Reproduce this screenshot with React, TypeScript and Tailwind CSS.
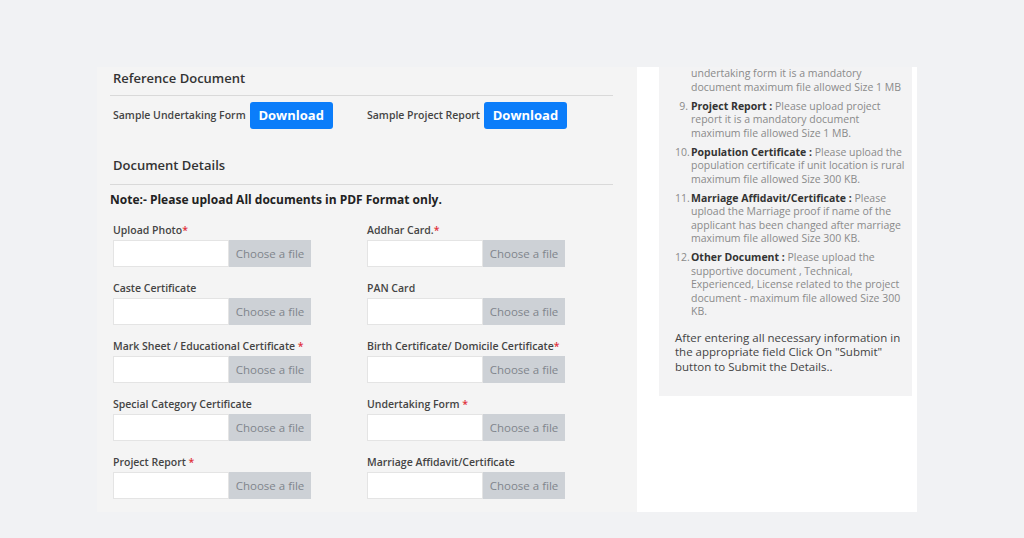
import React from "react";

const font = { fontFamily: '"Open Sans", "Liberation Sans", sans-serif' };

function FileField({ label, required }: { label: string; required?: boolean }) {
  return (
    <div className="flex flex-col">
      <div className="h-[14px] text-[10.5px] leading-[14px] font-semibold text-[#444]">
        {label}
        {required && <span className="text-[#e0303a]">*</span>}
      </div>
      <div className="mt-[3px] flex h-[27px] w-[198px]">
        <div className="w-[116px] bg-white border border-[#e4e4e4]" />
        <div className="flex w-[82px] items-center justify-center bg-[#cdd1d6] text-[11.5px] text-[#80858c]">
          Choose a file
        </div>
      </div>
    </div>
  );
}

const fields: [string, boolean, string, boolean][] = [
  ["Upload Photo", true, "Addhar Card.", true],
  ["Caste Certificate", false, "PAN Card", false],
  ["Mark Sheet / Educational Certificate ", true, "Birth Certificate/ Domicile Certificate", true],
  ["Special Category Certificate", false, "Undertaking Form ", true],
  ["Project Report ", true, "Marriage Affidavit/Certificate", false],
];

const items: { n?: string; b?: string; t: string }[] = [
  { t: "undertaking form it is a mandatory document maximum file allowed Size 1 MB" },
  { n: "9.", b: "Project Report :", t: " Please upload project report it is a mandatory document maximum file allowed Size 1 MB." },
  { n: "10.", b: "Population Certificate :", t: " Please upload the population certificate if unit location is rural maximum file allowed Size 300 KB." },
  { n: "11.", b: "Marriage Affidavit/Certificate :", t: " Please upload the Marriage proof if name of the applicant has been changed after marriage maximum file allowed Size 300 KB." },
  { n: "12.", b: "Other Document :", t: " Please upload the supportive document , Technical, Experienced, License related to the project document - maximum file allowed Size 300 KB." },
];

export default function App() {
  return (
    <div className="flex h-[538px] w-full bg-[#f1f2f4] pl-[97px] pt-[67px]" style={font}>
      <div className="flex h-[445px] w-[540px] flex-col bg-[#f4f4f4] pl-[13px] pr-[24px]">
        <div className="mt-[2px] pl-[3px] text-[13px] leading-[18px] font-semibold text-[#333]">Reference Document</div>
        <div className="mt-[8px] h-px bg-[#d9d9d9]" />
        <div className="mt-[6px] flex items-center pl-[3px]">
          <div className="flex w-[254px] items-center gap-[4px]">
            <span className="text-[10.5px] font-semibold text-[#444]">Sample Undertaking Form</span>
            <button className="h-[27px] w-[83px] rounded-[3px] bg-[#0b7dfa] text-[13px] font-bold text-white">Download</button>
          </div>
          <div className="flex items-center gap-[4px]">
            <span className="text-[10.5px] font-semibold text-[#444]">Sample Project Report</span>
            <button className="h-[27px] w-[83px] rounded-[3px] bg-[#0b7dfa] text-[13px] font-bold text-white">Download</button>
          </div>
        </div>
        <div className="mt-[27px] pl-[3px] text-[13px] leading-[18px] font-semibold text-[#333]">Document Details</div>
        <div className="mt-[10px] h-px bg-[#d9d9d9]" />
        <div className="mt-[7px] text-[12px] leading-[16px] font-bold text-[#222]">
          Note:- Please upload All documents in PDF Format only.
        </div>
        <div className="mt-[15px] flex flex-col gap-[14px] pl-[3px]">
          {fields.map(([a, ar, b, br]) => (
            <div key={a} className="grid grid-cols-[254px_254px]">
              <FileField label={a} required={ar} />
              <FileField label={b} required={br} />
            </div>
          ))}
        </div>
      </div>
      <div className="h-[445px] w-[280px] bg-white pl-[22px]">
        <div className="h-[329px] w-[253px] bg-[#f3f3f4] pl-[16px] pr-[6px]">
          <ol className="flex flex-col gap-[5.5px] text-[10.5px] leading-[13.5px] text-[#8a8a8a]">
            {items.map((it, i) => (
              <li key={i} className="flex">
                <span className="w-[15px] shrink-0 pr-[2px] text-right">{it.n}</span>
                <span className="ml-[1px]">
                  {it.b && <b className="font-bold text-[#333]">{it.b}</b>}
                  {it.t}
                </span>
              </li>
            ))}
          </ol>
          <p className="mt-[12px] text-[11.5px] leading-[14.5px] text-[#444]">
            After entering all necessary information in the appropriate field Click On "Submit" button to Submit the Details..
          </p>
        </div>
      </div>
    </div>
  );
}
